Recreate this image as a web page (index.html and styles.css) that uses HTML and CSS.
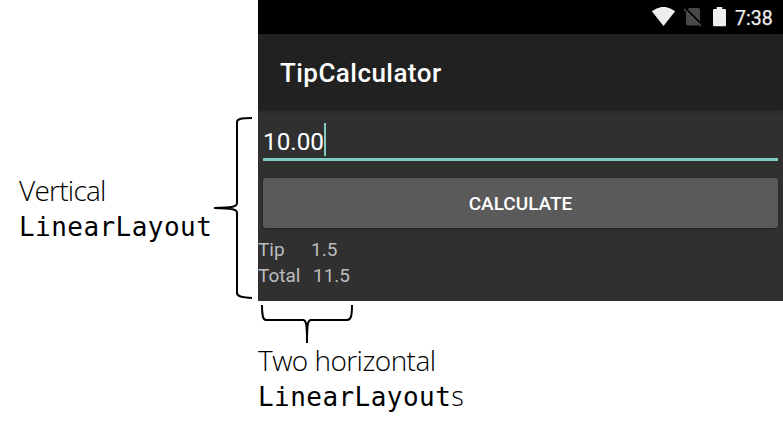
FILE: index.html
```html
<!DOCTYPE html>
<html lang="en">
<head>
<meta charset="utf-8">
<title>TipCalculator</title>
<link rel="stylesheet" href="styles.css">
</head>
<body>
<main class="figure">
  <aside class="vertical-note">
    <div class="caption">
      <div class="light vertical-label">Vertical</div>
      <div class="code">LinearLayout</div>
    </div>
    <svg class="brace-left" width="44" height="190" viewBox="0 0 44 190">
      <path d="M38 8C28 8.2 23 8.5 23 12V93C23 96.5 19 97.8 0 98C19 98.2 23 99.5 23 103V183C23 186.5 28 187.5 38 188"/>
    </svg>
  </aside>
  <section class="device">
    <header class="status">
      <svg class="wifi" width="25" height="20" viewBox="0 0 25 20"><path d="M.8 4.3Q12.5-4.6 24.2 4.3L12.5 19Z"/></svg>
      <svg class="no-sim" width="18" height="20" viewBox="0 0 18 20"><path class="sim" d="M5 1H14Q16 1 16 3V16.5Q16 18.5 14 18.5H4Q2 18.5 2 16.5V4.5Z"/><path class="slash-gap" d="M1 1L18 18"/><path class="slash" d="M0 2L17 19"/></svg>
      <svg class="battery" width="13" height="20" viewBox="0 0 13 20"><path d="M3.7 0H9.3V2H12Q13 2 13 3V18Q13 19.3 12 19.3H1Q0 19.3 0 18V3Q0 2 1 2H3.7Z"/></svg>
      <span class="time">7:38</span>
    </header>
    <div class="appbar">TipCalculator</div>
    <div class="content">
      <div class="field"><span class="amount">10.00</span><i class="cursor"></i></div>
      <button class="calculate">CALCULATE</button>
      <div class="result"><span class="name tip">Tip</span><span>1.5</span></div>
      <div class="result"><span class="name total">Total</span><span>11.5</span></div>
    </div>
  </section>
  <section class="horizontal-note">
    <svg class="brace-bottom" width="100" height="43" viewBox="0 0 100 43">
      <path d="M4 4C4 15 5 19 8 19H45C48 19 49 22 49 42C49 22 50 19 53 19H89C93 19 94 15 94 4"/>
    </svg>
    <div class="light horizontal-label">Two horizontal</div>
    <div class="code">LinearLayout<span class="plural">s</span></div>
  </section>
</main>
</body>
</html>
```

FILE: styles.css
```css
* { box-sizing: border-box; }
body { margin: 0; background: #fff; color: #000; overflow: hidden; }
.figure { width: 783px; height: 432px; display: grid; grid-template-columns: 258px 525px; grid-template-rows: 301px 131px; }
svg { display: block; }
.vertical-note { display: flex; padding-left: 19px; }
.caption { width: 195px; padding-top: 172px; white-space: nowrap; }
.brace-left { margin-top: 110px; }
.brace-left path, .brace-bottom path { fill: none; stroke: #000; stroke-width: 2; }
.light { font: 300 28px/36px "Open Sans", sans-serif; }
.vertical-label { height: 37px; letter-spacing: -.75px; }
.horizontal-label { height: 36px; margin-top: -2px; letter-spacing: -.55px; }
.horizontal-note { grid-column: 2; }
.code { height: 36px; font: 26px/36px "DejaVu Sans Mono", monospace; letter-spacing: .45px; }
.plural { font: 300 27px/36px "Open Sans", sans-serif; letter-spacing: 0; }
.device { overflow: hidden; background: #303030; color: #fff; font-family: Roboto, sans-serif; }
.status { height: 34px; background: #000; display: flex; align-items: flex-start; padding: 7px 0 0 393px; }
.wifi, .battery { fill: #eee; }
.no-sim { margin-left: 8px; }
.sim { fill: #484848; }
.slash-gap { stroke: #000; stroke-width: 2; }
.slash { stroke: #505050; stroke-width: 1.5; }
.battery { margin-left: 11px; }
.time { margin-left: 9px; font: 400 19.5px/23px Roboto, sans-serif; color: #eee; -webkit-text-stroke: .25px #eee; }
.appbar { height: 76px; padding-left: 22px; background: #212121; font: 500 26px/79px Roboto, sans-serif; letter-spacing: .45px; box-shadow: 0 1px 4px rgba(0,0,0,.3); }
.content { padding: 13px 5px 0; }
.field { height: 38px; display: flex; align-items: flex-start; border-bottom: 3px solid #80cbc4; }
.amount { font-size: 24.3px; line-height: 37px; }
.cursor { width: 2px; height: 33px; background: #80cbc4; }
.calculate { display: block; width: 100%; height: 50px; margin: 17px 0 9px; padding: 1px 0 0; border: 0; border-radius: 3px; background: #5a5a5b; color: #fff; font: 500 19px/50px Roboto, sans-serif; box-shadow: 0 1px 2px rgba(0,0,0,.35); }
.result { display: flex; margin-left: -5px; color: #bdbdbd; font-size: 19px; line-height: 26px; }
.tip { width: 53px; }
.total { width: 55px; }
```
